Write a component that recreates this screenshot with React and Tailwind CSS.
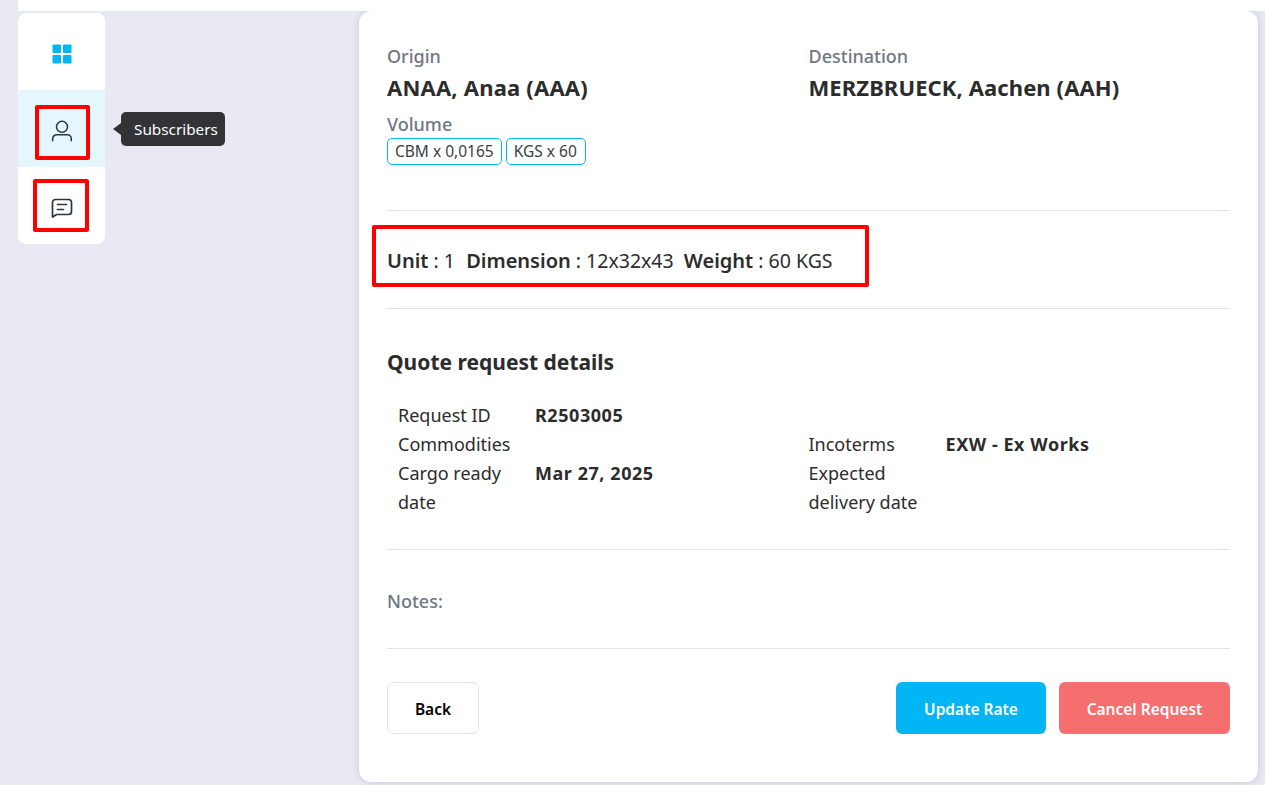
import React from 'react';

const font = { fontFamily: '"Noto Sans", sans-serif' };

const Highlight = ({ className }) => (
  <div className={`absolute border-4 border-[#ff0000] rounded-[2px] pointer-events-none ${className}`} />
);

const GridIcon = () => (
  <svg width="20" height="20" viewBox="0 0 20 20" fill="#02b6f5">
    <rect x="0.5" y="0.5" width="8.5" height="8.5" rx="1" />
    <rect x="11" y="0.5" width="8.5" height="8.5" rx="1" />
    <rect x="0.5" y="11" width="8.5" height="8.5" rx="1" />
    <rect x="11" y="11" width="8.5" height="8.5" rx="1" />
  </svg>
);

const PersonIcon = () => (
  <svg width="22" height="22" viewBox="0 0 22 22" fill="none" stroke="#2c3440" strokeWidth="1.5" strokeLinecap="round" strokeLinejoin="round">
    <circle cx="11" cy="6.8" r="5.5" />
    <path d="M1.7 20.7v-2a4 4 0 0 1 4-4h10.6a4 4 0 0 1 4 4v2" />
  </svg>
);

const ChatIcon = () => (
  <svg width="22" height="22" viewBox="0 0 22 22" fill="none" stroke="#2c3440" strokeWidth="1.7" strokeLinecap="round" strokeLinejoin="round">
    <path d="M1.5 20V5.5a3 3 0 0 1 3-3h13a3 3 0 0 1 3 3v9a3 3 0 0 1-3 3H5.5L1.5 20Z" />
    <path d="M6.5 7.5h9" />
    <path d="M6.5 12.5h6" />
  </svg>
);

const Row = ({ label, value }) => (
  <div className="flex items-start min-h-[29px]">
    <div className="w-[137px] shrink-0 leading-[29px]">{label}</div>
    <div className="font-bold leading-[29px] tracking-[0.55px]">{value}</div>
  </div>
);

export default function App() {
  return (
    <div style={font} className="relative h-[785px] overflow-hidden bg-[#e9e9f3] text-[#2c2c2c]">
      <div className="relative z-10 ml-[18px] h-[11px] bg-white" />

      <div className="flex">
        {/* Sidebar */}
        <div className="ml-[18px] mt-[2px] w-[87px] h-[231px] shrink-0 bg-white rounded-[8px] overflow-hidden flex flex-col">
          <div className="h-[77px] pt-[4px] flex items-center justify-center">
            <GridIcon />
          </div>
          <div className="h-[77px] pt-[4px] flex items-center justify-center bg-[#e5f6fd]">
            <PersonIcon />
          </div>
          <div className="h-[77px] pt-[4px] flex items-center justify-center">
            <ChatIcon />
          </div>
        </div>

        {/* Main card */}
        <div className="ml-[254px] w-[899px] h-[771px] shrink-0 bg-white rounded-[12px] shadow-[0_0_6px_rgba(170,170,205,0.6)] px-[28px] pt-[32px]">
          <div className="grid grid-cols-2 h-[168px] border-b border-[#e2e2ea]">
            <div>
              <div className="text-[#6f7785] text-[18px] font-medium leading-[27px]">Origin</div>
              <div className="text-[22px] font-bold leading-[36px] -mt-[1px] tracking-[0.2px]">ANAA, Anaa (AAA)</div>
              <div className="text-[#6f7785] text-[18px] font-medium leading-[27px] mt-[6px]">Volume</div>
              <div className="flex gap-[4px]">
                <span className="h-[27px] px-[7px] rounded-[5px] border border-[#02b6f5] text-[15.5px] leading-[25px] text-[#3a3f47]">CBM x 0,0165</span>
                <span className="h-[27px] pl-[7px] pr-[8px] rounded-[5px] border border-[#02b6f5] text-[15.5px] leading-[25px] text-[#3a3f47]">KGS x 60</span>
              </div>
            </div>
            <div>
              <div className="text-[#6f7785] text-[18px] font-medium leading-[27px]">Destination</div>
              <div className="text-[22px] font-bold leading-[36px] -mt-[1px] tracking-[0.1px]">MERZBRUECK, Aachen (AAH)</div>
            </div>
          </div>

          <div className="h-[98px] pt-[2px] flex items-center border-b border-[#e2e2ea] text-[19.5px]">
            <span className="font-semibold text-[20px]">Unit</span>
            <span className="whitespace-pre"> : 1  </span>
            <span className="font-semibold text-[20px] ml-[1px]">Dimension</span>
            <span className="whitespace-pre"> : 12x32x43  </span>
            <span className="font-semibold text-[20px]">Weight</span>
            <span className="whitespace-pre"> : 60 KGS</span>
          </div>

          <div className="h-[241px] border-b border-[#e2e2ea] pt-[35px]">
            <h2 className="text-[21px] font-bold leading-[36px]">Quote request details</h2>
            <div className="grid grid-cols-2 mt-[21px] text-[18px]">
              <div className="pl-[11px]">
                <Row label="Request ID" value="R2503005" />
                <Row label="Commodities" value="" />
                <Row label={<span>Cargo ready<br />date</span>} value="Mar 27, 2025" />
              </div>
              <div className="pt-[29px]">
                <Row label="Incoterms" value="EXW - Ex Works" />
                <Row label={<span>Expected<br />delivery date</span>} value="" />
              </div>
            </div>
          </div>

          <div className="h-[99px] border-b border-[#e2e2ea] pt-[38px]">
            <div className="text-[#6f7785] text-[18px] font-medium leading-[27px]">Notes:</div>
          </div>

          <div className="flex items-center justify-between mt-[33px]">
            <button className="w-[92px] h-[52px] pt-[3px] rounded-[6px] border border-[#e2e2ea] bg-white text-black text-[15.5px] font-semibold">Back</button>
            <div className="flex gap-[13px]">
              <button className="w-[150px] h-[52px] pt-[3px] rounded-[6px] bg-[#02b6f5] text-white text-[15.5px] font-semibold">Update Rate</button>
              <button className="w-[171px] h-[52px] pt-[3px] rounded-[6px] bg-[#f66f6f] text-white text-[15.5px] font-semibold">Cancel Request</button>
            </div>
          </div>
        </div>
      </div>

      {/* Tooltip */}
      <div className="absolute z-20 left-[121px] top-[112px] h-[34px] w-[104px] rounded-[5px] bg-[#323336] text-white text-[15.3px] leading-[34px] pl-[13px]">
        <span className="absolute -left-[8px] top-[11px] w-0 h-0 border-y-[6px] border-y-transparent border-r-[8px] border-r-[#323336]" />
        Subscribers
      </div>

      {/* Annotation boxes */}
      <Highlight className="z-20 left-[35px] top-[105px] w-[55px] h-[55px]" />
      <Highlight className="z-20 left-[33px] top-[179px] w-[56px] h-[53px]" />
      <Highlight className="z-20 left-[372px] top-[225px] w-[497px] h-[62px]" />
    </div>
  );
}
